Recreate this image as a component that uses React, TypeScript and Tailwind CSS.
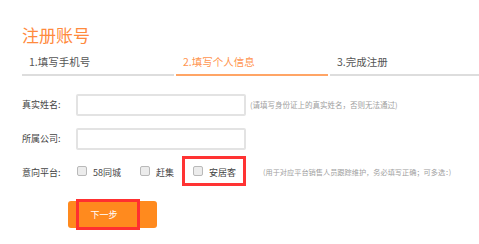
import { useState } from "react";

const tabs: string[] = ['1.填写手机号', '2.填写个人信息', '3.完成注册'];

const platforms: { id: string; label: string; marked?: boolean }[] = [
  { id: '58', label: '58同城' },
  { id: 'ganji', label: '赶集' },
  { id: 'anjuke', label: '安居客', marked: true },
];

const Checkbox = ({ checked, onClick }: { checked: boolean; onClick: () => void }) => (
  <span
    onClick={onClick}
    className="w-[10px] h-[10px] rounded-[2px] border border-[#b9b9b9] bg-[#ececec] inline-block"
  >
    {checked ? <span className="block w-full h-full bg-[#ff8a2a] rounded-[1px]" /> : null}
  </span>
);

const App = () => {
  const [activeTab] = useState<number>(1);
  const [picked, setPicked] = useState<string[]>([]);

  const toggle = (id: string) => {
    setPicked(picked.includes(id) ? picked.filter((p) => p !== id) : [...picked, id]);
  };

  return (
    <div className="w-[479px] h-[244px] bg-white pt-[25px] pl-[22px] font-['Noto_Sans_CJK_SC',sans-serif] overflow-hidden">
      <h1 className="text-[17px] leading-[20px] text-[#ff8a3d]">注册账号</h1>

      <header className="flex gap-[2px] mt-[7px]">
        {tabs.map((tab, index) => (
          <div
            key={index}
            className={
              (index === 2 ? 'flex-1 ' : 'w-[152px] ') +
              'h-[24px] pl-[7px] text-[10.5px] leading-[20px] border-b-2 ' +
              (index === activeTab
                ? 'text-[#ff9550] border-[#ffa566]'
                : 'text-[#555555] border-[#dddddd]')
            }
          >
            {tab}
          </div>
        ))}
      </header>

      <main className="flex flex-col mt-[18px] text-[9px] text-[#444444]">
        <div className="flex items-center h-[22px]">
          <span className="w-[54px]">真实姓名:</span>
          <input className="w-[170px] h-[22px] border-2 border-[#e3e3e3] rounded-[2px] outline-none" />
          <span className="ml-[4px] text-[7.5px] text-[#a0a0a0]">(请填写身份证上的真实姓名，否则无法通过)</span>
        </div>

        <div className="flex items-center h-[22px] mt-[12px]">
          <span className="w-[54px]">所属公司:</span>
          <input className="w-[170px] h-[22px] border-2 border-[#e3e3e3] rounded-[2px] outline-none" />
        </div>

        <div className="flex items-center h-[30px] mt-[6px]">
          <span className="w-[54px] mt-[4px]">意向平台:</span>
          {platforms.map((p) => (
            <label
              key={p.id}
              className={
                'flex items-center gap-[6px] ' +
                (p.marked
                  ? 'h-[30px] pl-[8px] pr-[7px] border-[3px] border-[#ff3333]'
                  : p.id === '58'
                    ? 'w-[64px] pl-[1px]'
                    : 'w-[42px]')
              }
            >
              <Checkbox checked={picked.includes(p.id)} onClick={() => toggle(p.id)} />
              <span className="mt-[3px]">{p.label}</span>
            </label>
          ))}
          <span className="ml-[17px] mt-[3px] text-[7.2px] text-[#a0a0a0]">(用于对应平台销售人员跟踪维护，务必填写正确；可多选：)</span>
        </div>

        <div className="mt-[15px] ml-[46px]">
          <button className="relative w-[89px] h-[27px] bg-[#ff8a1e] rounded-[3px] text-white text-[9px] pr-[17px]">
            下一步
            <span className="absolute left-[8px] top-[-2px] w-[64px] h-[31px] border-[3px] border-[#ff3030]" />
          </button>
        </div>
      </main>
    </div>
  );
};

export default App;
